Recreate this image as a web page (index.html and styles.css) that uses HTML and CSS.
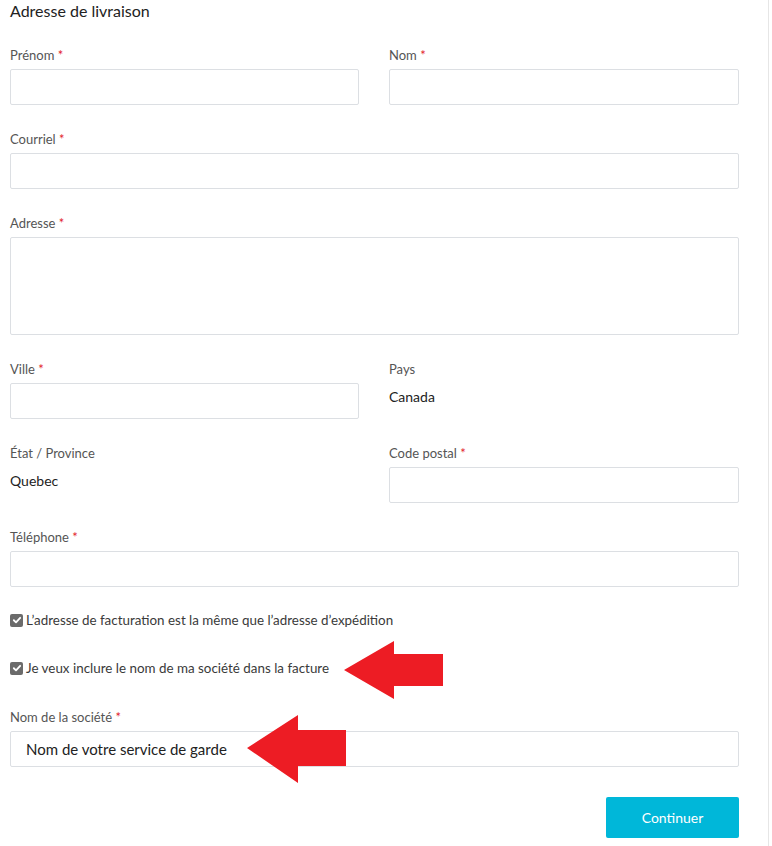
FILE: index.html
```html
<!DOCTYPE html>
<html lang="fr">
<head>
    <meta charset="UTF-8">
    <meta name="viewport" content="width=device-width, initial-scale=1.0">
    <title>Adresse de livraison</title>
    <link rel="stylesheet" href="styles.css">
</head>
<body>
    <div class="checkout-panel">
        <form class="shipping-form">
            <h2 class="form-title">Adresse de livraison</h2>

            <div class="form-row two-cols">
                <div class="field">
                    <label>Prénom <span class="req">*</span></label>
                    <input type="text">
                </div>
                <div class="field">
                    <label>Nom <span class="req">*</span></label>
                    <input type="text">
                </div>
            </div>

            <div class="form-row">
                <div class="field">
                    <label>Courriel <span class="req">*</span></label>
                    <input type="text">
                </div>
            </div>

            <div class="form-row">
                <div class="field">
                    <label>Adresse <span class="req">*</span></label>
                    <textarea></textarea>
                </div>
            </div>

            <div class="form-row two-cols">
                <div class="field">
                    <label>Ville <span class="req">*</span></label>
                    <input type="text">
                </div>
                <div class="field">
                    <label>Pays</label>
                    <div class="static-value">Canada</div>
                </div>
            </div>

            <div class="form-row two-cols">
                <div class="field">
                    <label>État / Province</label>
                    <div class="static-value">Quebec</div>
                </div>
                <div class="field">
                    <label>Code postal <span class="req">*</span></label>
                    <input type="text">
                </div>
            </div>

            <div class="form-row">
                <div class="field">
                    <label>Téléphone <span class="req">*</span></label>
                    <input type="text">
                </div>
            </div>

            <div class="check-row">
                <span class="check-box"><svg viewBox="0 0 12 12" width="10" height="10"><path d="M2.2 6.3 L4.8 8.8 L9.8 3.4" fill="none" stroke="#fff" stroke-width="2.2" stroke-linecap="round" stroke-linejoin="round"/></svg></span>
                <span>L’adresse de facturation est la même que l’adresse d’expédition</span>
            </div>

            <div class="check-row">
                <span class="check-box"><svg viewBox="0 0 12 12" width="10" height="10"><path d="M2.2 6.3 L4.8 8.8 L9.8 3.4" fill="none" stroke="#fff" stroke-width="2.2" stroke-linecap="round" stroke-linejoin="round"/></svg></span>
                <span>Je veux inclure le nom de ma société dans la facture</span>
                <svg class="arrow arrow-check" viewBox="0 0 100 58" width="100" height="58"><polygon points="0,29 50,0 50,13 99,13 99,45 50,45 50,58" fill="#ed1c24"/></svg>
            </div>

            <div class="form-row company-row">
                <div class="field">
                    <label>Nom de la société <span class="req">*</span></label>
                    <input type="text" class="filled" value="Nom de votre service de garde">
                </div>
                <svg class="arrow arrow-company" viewBox="0 0 100 68" width="100" height="68"><polygon points="0,33 51,0 51,15 99,15 99,51 51,51 51,68" fill="#ed1c24"/></svg>
            </div>

            <div class="form-actions">
                <button type="button" class="btn-continue">Continuer</button>
            </div>
        </form>
    </div>
</body>
</html>
```

FILE: styles.css
```css
body {
    margin: 0;
    background: #fff;
    font-family: "Source Sans Pro", Lato, "Liberation Sans", sans-serif;
    color: #333;
}

.checkout-panel {
    width: 769px;
    min-height: 846px;
    border-right: 1px solid #e6e6e6;
    box-sizing: border-box;
}

.shipping-form {
    width: 729px;
    padding: 0 0 0 10px;
}

.form-title {
    margin: 0 0 23px;
    font-size: 16px;
    font-weight: normal;
    line-height: 22px;
    color: #222;
}

.form-row {
    margin-bottom: 24px;
}

.two-cols {
    display: grid;
    grid-template-columns: 349px 350px;
    column-gap: 30px;
}

.field label {
    display: block;
    height: 20px;
    line-height: 20px;
    margin-bottom: 4px;
    font-size: 13px;
    color: #555;
}

.req {
    color: #e2222b;
}

.field input,
.field textarea {
    display: block;
    width: 100%;
    height: 36px;
    box-sizing: border-box;
    border: 1px solid #dcdfe3;
    border-radius: 2px;
    background: #fff;
    font-family: inherit;
    margin: 0;
}

.field textarea {
    height: 98px;
    resize: none;
}

.field input.filled {
    padding: 0 0 0 15px;
    font-size: 15px;
    color: #222;
}

.static-value {
    height: 36px;
    padding-top: 4px;
    box-sizing: border-box;
    line-height: 20px;
    font-size: 14px;
    color: #222;
}

.check-row {
    display: flex;
    align-items: center;
    gap: 3px;
    height: 20px;
    margin: -1px 0 29px;
    font-size: 13.4px;
    color: #3a3a3a;
    position: relative;
}

.check-box {
    width: 13px;
    height: 13px;
    border-radius: 2px;
    background: #6b6b6b;
    display: flex;
    align-items: center;
    justify-content: center;
}

.company-row {
    position: relative;
    margin-bottom: 30px;
}

.arrow {
    position: absolute;
}

.arrow-check {
    left: 334px;
    top: -17px;
}

.arrow-company {
    left: 237px;
    top: 8px;
}

.form-actions {
    display: flex;
    justify-content: flex-end;
}

.btn-continue {
    width: 133px;
    height: 41px;
    border: none;
    border-radius: 2px;
    background: #00b7d9;
    color: #fff;
    font-family: inherit;
    font-size: 14px;
    cursor: pointer;
}
```
